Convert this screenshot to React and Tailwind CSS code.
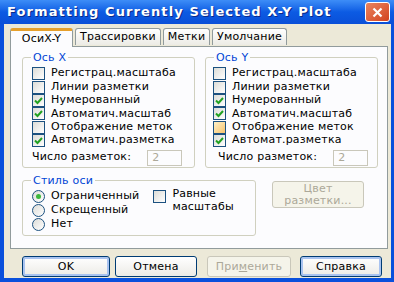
import React from 'react';

const Check = ({ checked = false, hot = false }) => (
  <span
    className={`w-[13px] h-[13px] shrink-0 border border-[#1c5180] flex items-center justify-center ${
      hot ? 'bg-linear-to-br from-[#fdf0c8] to-[#f7c46a]' : 'bg-linear-to-br from-[#dcdcd7] to-white'
    }`}
  >
    {checked && (
      <svg width="9" height="9" viewBox="0 0 9 9">
        <path d="M1 4.5 L3.5 7 L8 2" fill="none" stroke="#21a121" strokeWidth="2" />
      </svg>
    )}
  </span>
);

const Radio = ({ checked = false }) => (
  <span className="w-[13px] h-[13px] shrink-0 rounded-full border border-[#1c5180] bg-linear-to-br from-[#dcdcd7] to-white flex items-center justify-center">
    {checked && <span className="w-[5px] h-[5px] rounded-full bg-[#3cb83c]" />}
  </span>
);

const CheckRow = ({ label, checked, hot }) => (
  <div className="h-[13.4px] flex items-center gap-[6px]">
    <Check checked={checked} hot={hot} />
    <span className="whitespace-nowrap">{label}</span>
  </div>
);

const AxisGroup = ({ title, rows, inset, labelInset }) => (
  <fieldset className="w-[173px] h-[117px] border border-[#d0d0bf] rounded-[3px]">
    <legend className="ml-[8px] px-[2px] text-[#0046d5] leading-[13px]">{title}</legend>
    <div className={`flex flex-col pt-[3px] ${inset}`}>
      {rows.map((r) => (
        <CheckRow key={r.label} {...r} />
      ))}
    </div>
    <div className={`flex items-center mt-[2px] ${labelInset}`}>
      <span className="whitespace-nowrap">Число разметок:</span>
      <span className="w-[35px] h-[16px] ml-[16px] border border-[#c9c7ba] text-[#aca899] pl-[4px] leading-[14px]">
        2
      </span>
    </div>
  </fieldset>
);

const Btn = ({ children, width, className = '', disabled = false, focus = false }) => (
  <button
    className={`${width} h-[21px] rounded-[3px] border text-[11px] leading-none ${
      disabled
        ? 'border-[#c9c7ba] text-[#aca899] bg-[#f5f4ea]'
        : 'border-[#003c74] text-black bg-linear-to-b from-white to-[#ecebe6]'
    } ${focus ? 'shadow-[inset_0_0_0_2px_#a9c3f0]' : ''} ${className}`}
  >
    {children}
  </button>
);

export default function App() {
  const xRows = [
    { label: 'Регистрац.масштаба' },
    { label: 'Линии разметки' },
    { label: 'Нумерованный', checked: true },
    { label: 'Автоматич.масштаб', checked: true },
    { label: 'Отображение меток' },
    { label: 'Автоматич.разметка', checked: true },
  ];
  const yRows = [
    { label: 'Регистрац.масштаба' },
    { label: 'Линии разметки' },
    { label: 'Нумерованный', checked: true },
    { label: 'Автоматич.масштаб', checked: true },
    { label: 'Отображение меток', hot: true },
    { label: 'Автомат.разметка', checked: true },
  ];

  return (
    <div className="w-[394px] h-[282px] flex flex-col bg-[#0a50dc] font-['DejaVu_Sans',sans-serif] text-[11px] tracking-[0.2px] text-black select-none">
      {/* title bar */}
      <div className="h-[24px] shrink-0 flex items-center pl-[7px] pr-[4px] bg-linear-to-b from-[#3d8df7] via-[#0c5be3] to-[#0a4fd8]">
        <span className="text-white font-bold text-[13px] tracking-[1.1px] [text-shadow:1px_1px_0_#0a2a8a]">
          Formatting Currently Selected X-Y Plot
        </span>
        <span className="ml-auto w-[25px] h-[20px] rounded-[3px] border border-white bg-linear-to-br from-[#e9835f] to-[#d2421c] flex items-center justify-center">
          <svg width="11" height="11" viewBox="0 0 11 11">
            <path d="M1.5 1.5 L9.5 9.5 M9.5 1.5 L1.5 9.5" stroke="white" strokeWidth="2.2" />
          </svg>
        </span>
      </div>

      {/* body */}
      <div className="flex-1 ml-[4px] mr-[3px] mb-[4px] bg-[#ece9d8] pt-[3px] pl-[6px] pr-[3px] flex flex-col">
        {/* tabs */}
        <div className="flex items-end h-[19px] relative z-10">
          <div className="w-[63px] h-[19px] bg-[#fcfcfe] border-x border-[#919b9c] border-t-[3px] border-t-[#e6a02c] rounded-t-[3px] flex items-center justify-center -mb-px">
            ОсиX-Y
          </div>
          <div className="w-[86px] h-[17px] ml-[2px] mb-px bg-linear-to-b from-white to-[#ecebe5] border border-b-0 border-[#919b9c] rounded-t-[3px] flex items-center justify-center">
            Трассировки
          </div>
          <div className="w-[47px] h-[17px] ml-[2px] mb-px bg-linear-to-b from-white to-[#ecebe5] border border-b-0 border-[#919b9c] rounded-t-[3px] flex items-center justify-center">
            Метки
          </div>
          <div className="w-[75px] h-[17px] ml-[2px] mb-px bg-linear-to-b from-white to-[#ecebe5] border border-b-0 border-[#919b9c] rounded-t-[3px] flex items-center justify-center">
            Умолчание
          </div>
        </div>

        {/* panel */}
        <div className="h-[203px] border border-[#919b9c] bg-[#fcfcfe] pt-[4px] pl-[11px] flex flex-col">
          <div className="flex gap-[10px]">
            <AxisGroup title="Ось X" rows={xRows} inset="pl-[9px]" labelInset="pl-[9px]" />
            <AxisGroup title="Ось Y" rows={yRows} inset="pl-[7px]" labelInset="pl-[12px]" />
          </div>

          <div className="flex mt-[6px]">
            <fieldset className="w-[234px] h-[62px] border border-[#d0d0bf] rounded-[3px] flex">
              <legend className="ml-[8px] px-[2px] text-[#0046d5] leading-[13px]">Стиль оси</legend>
              <div className="flex flex-col pl-[9px] pt-[2px]">
                <div className="h-[14px] flex items-center gap-[6px]">
                  <Radio checked />
                  <span>Ограниченный</span>
                </div>
                <div className="h-[14px] flex items-center gap-[6px]">
                  <Radio />
                  <span>Скрещенный</span>
                </div>
                <div className="h-[14px] flex items-center gap-[6px]">
                  <Radio />
                  <span>Нет</span>
                </div>
              </div>
              <div className="flex items-start gap-[6px] ml-[14px] pt-[3px]">
                <Check />
                <span className="leading-[13px] -mt-[3px]">
                  Равные
                  <br />
                  масштабы
                </span>
              </div>
            </fieldset>
            <button className="w-[92px] h-[27px] ml-[16px] mt-[7px] rounded-[3px] border border-[#c9c7ba] bg-[#f5f4ea] text-[#aca899] leading-[12px]">
              Цвет
              <br />
              разметки...
            </button>
          </div>
        </div>

        {/* buttons */}
        <div className="flex items-center mt-[7px] pl-[12px]">
          <Btn width="w-[88px]" focus>
            OK
          </Btn>
          <Btn width="w-[82px]" className="ml-[5px]">
            Отмена
          </Btn>
          <Btn width="w-[84px]" className="ml-[10px]" disabled>
            При<span className="underline">м</span>енить
          </Btn>
          <Btn width="w-[82px]" className="ml-[9px]" focus>
            Справка
          </Btn>
        </div>
      </div>
    </div>
  );
}
